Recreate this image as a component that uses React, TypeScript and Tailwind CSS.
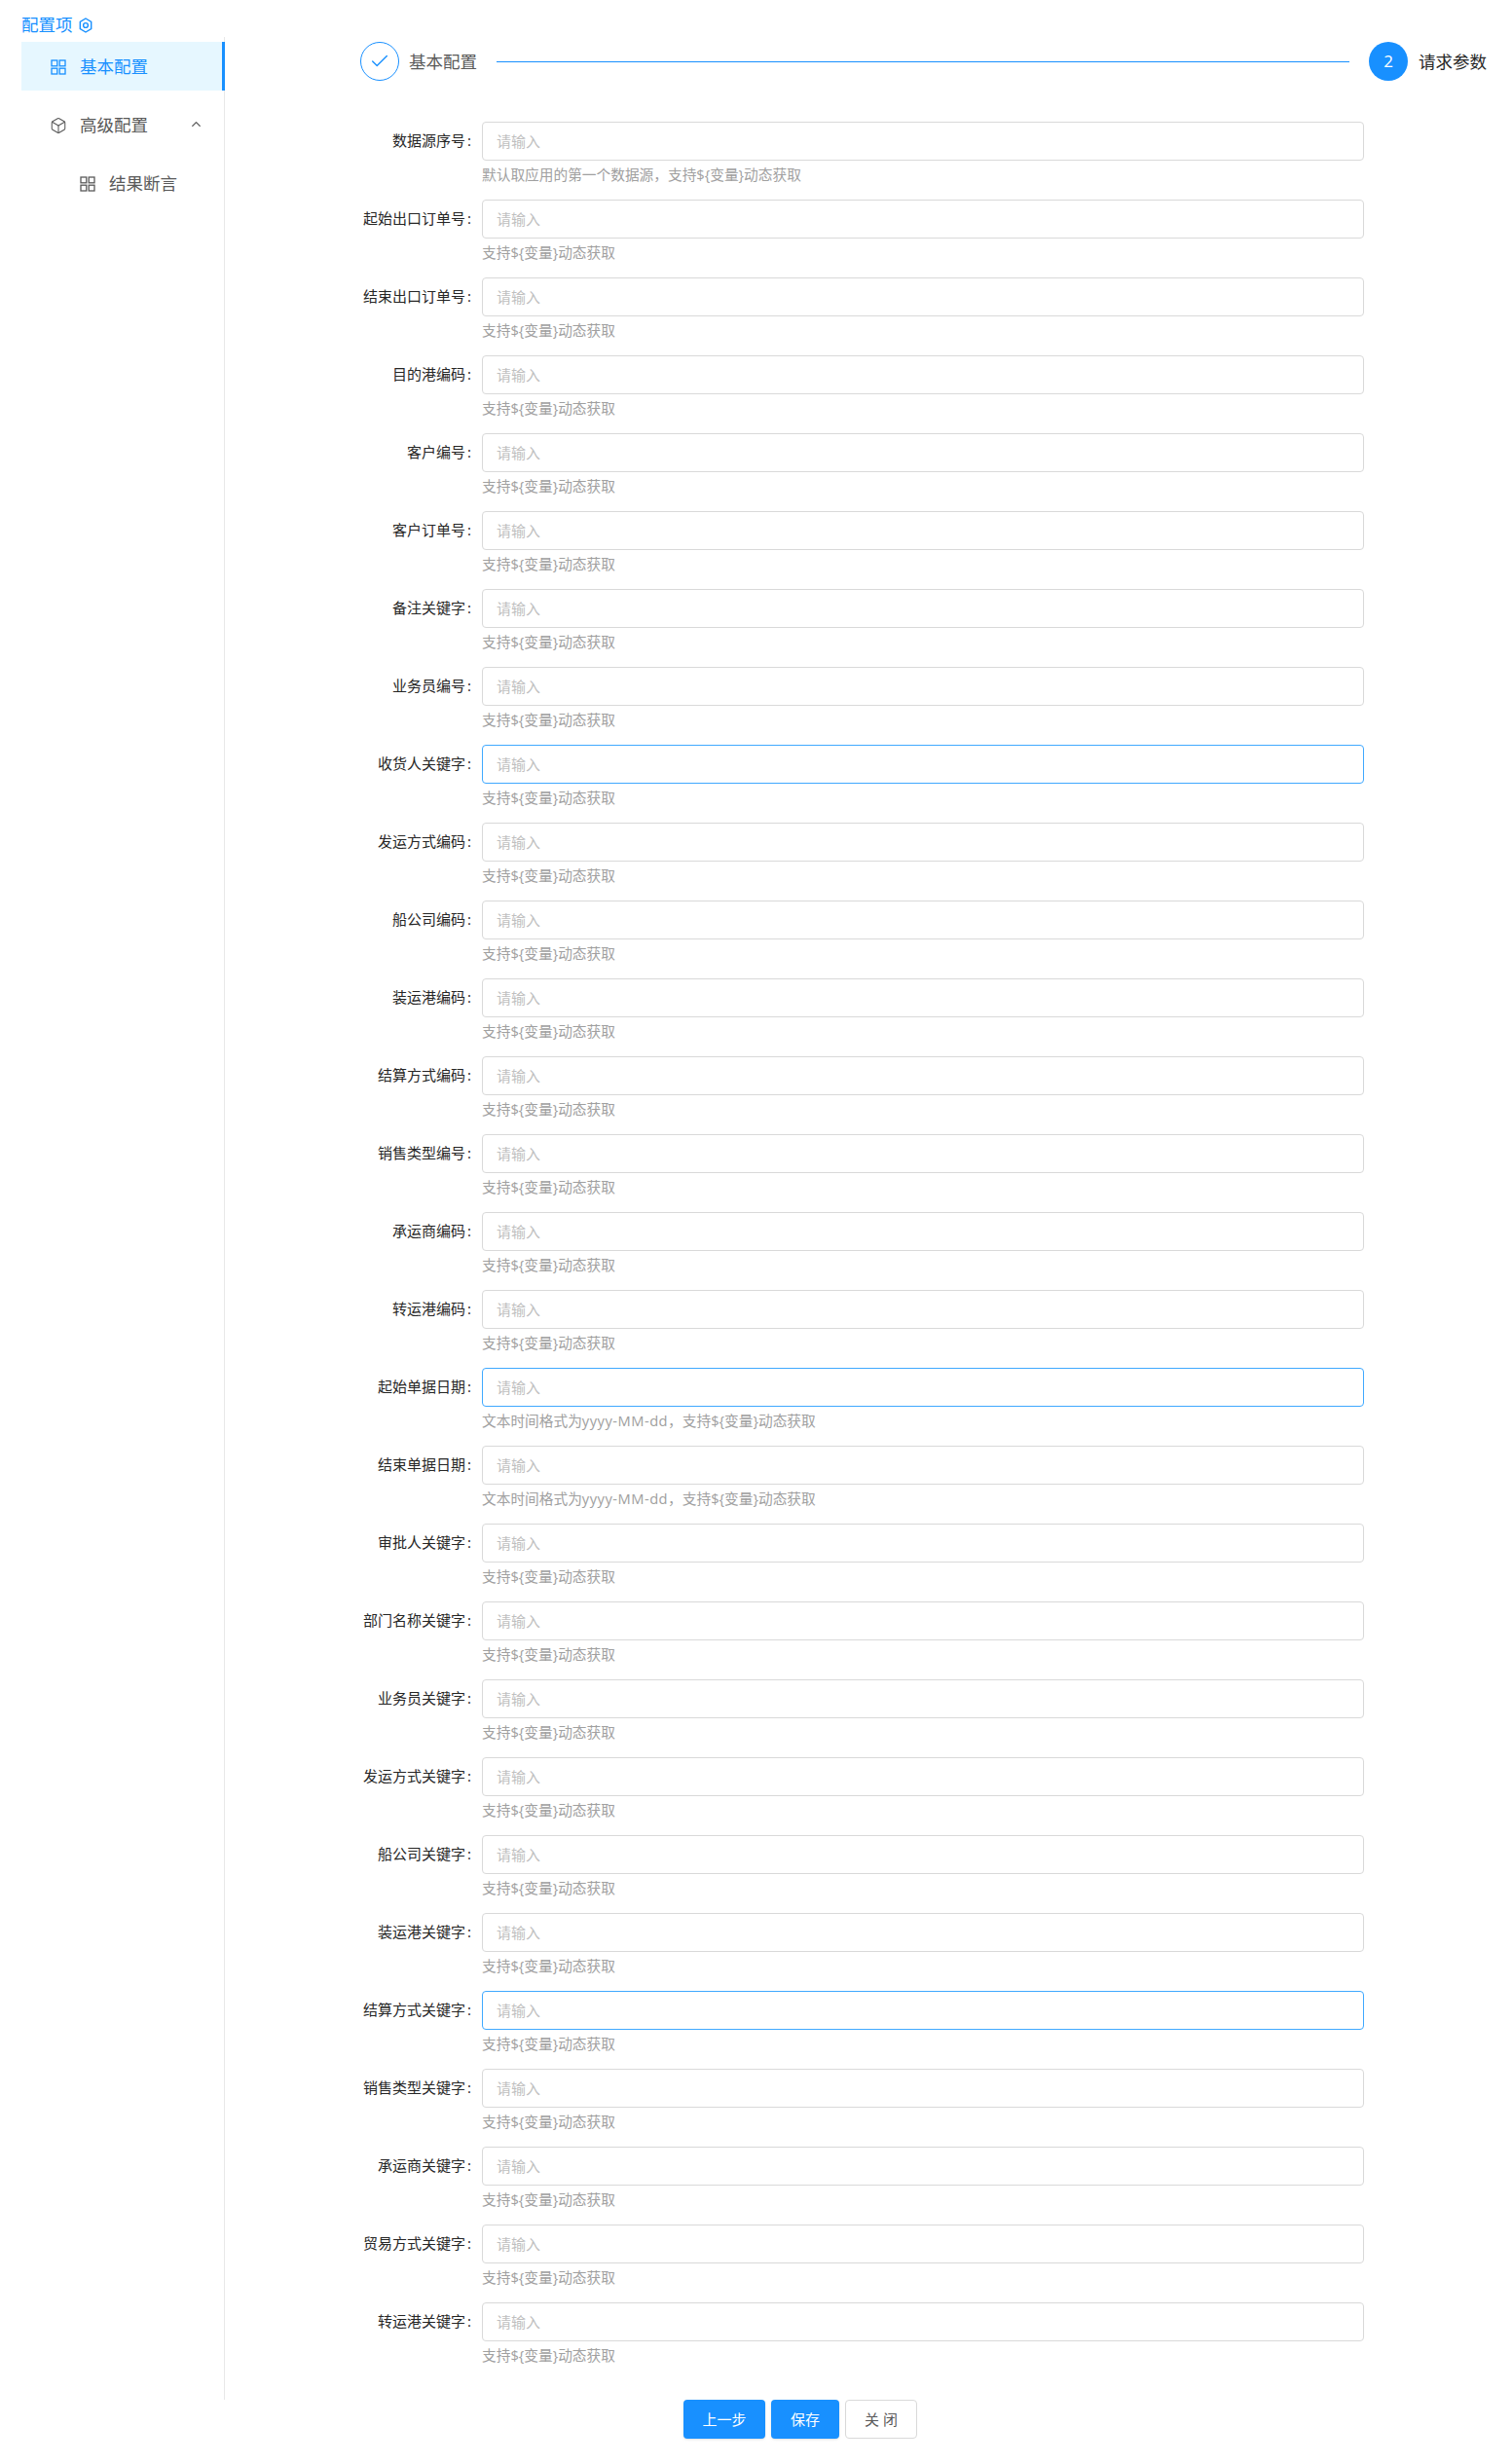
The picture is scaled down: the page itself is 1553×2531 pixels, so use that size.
import type { ReactElement, ReactNode } from 'react';
import { Box, Check, ChevronUp } from 'lucide-react';

const DEFAULT_HELP = '支持${变量}动态获取';
const DATE_HELP = (
  <>
    文本时间格式为<span className="tracking-[0.5px]">yyyy-MM-dd</span>{'\uFF0C支持${变量}动态获取'}
  </>
);

const FIELDS: { label: string; help?: ReactNode; focus?: boolean }[] = [
  { label: '数据源序号', help: '默认取应用的第一个数据源\uFF0C支持${变量}动态获取' },
  { label: '起始出口订单号' },
  { label: '结束出口订单号' },
  { label: '目的港编码' },
  { label: '客户编号' },
  { label: '客户订单号' },
  { label: '备注关键字' },
  { label: '业务员编号' },
  { label: '收货人关键字', focus: true },
  { label: '发运方式编码' },
  { label: '船公司编码' },
  { label: '装运港编码' },
  { label: '结算方式编码' },
  { label: '销售类型编号' },
  { label: '承运商编码' },
  { label: '转运港编码' },
  { label: '起始单据日期', help: DATE_HELP, focus: true },
  { label: '结束单据日期', help: DATE_HELP },
  { label: '审批人关键字' },
  { label: '部门名称关键字' },
  { label: '业务员关键字' },
  { label: '发运方式关键字' },
  { label: '船公司关键字' },
  { label: '装运港关键字' },
  { label: '结算方式关键字', focus: true },
  { label: '销售类型关键字' },
  { label: '承运商关键字' },
  { label: '贸易方式关键字' },
  { label: '转运港关键字' },
];

function GridIcon({ className }: { className: string }): ReactElement {
  return (
    <svg viewBox="0 0 16 16" fill="none" stroke="currentColor" strokeWidth="1.3" className={className}>
      <rect x="1" y="1" width="5.8" height="5.8" />
      <rect x="9.2" y="1" width="5.8" height="5.8" />
      <rect x="1" y="9.2" width="5.8" height="5.8" />
      <rect x="9.2" y="9.2" width="5.8" height="5.8" />
    </svg>
  );
}

function Sidebar(): ReactElement {
  return (
    <aside className="w-[231px] shrink-0 pl-[22px] pb-[66px] flex flex-col">
      <div className="h-[38px] pt-[12px] flex items-center gap-[6px] text-[17.5px] leading-[26px] text-[#1890ff]">
        <span>配置项</span>
        <svg viewBox="0 0 14 16" fill="none" stroke="currentColor" strokeWidth="1.4" className="w-[14px] h-[16px] mt-[2px]">
          <path d="M7 1l5.700 3.300v7.400L7 15l-5.700-3.300V4.300z" />
          <circle cx="7" cy="8" r="2.400" />
        </svg>
      </div>
      <nav className="flex-1 border-r border-[#e8e8e8] pt-[5px] text-[17.5px] leading-[26px] text-[#595959]">
        <div className="h-[50px] -mr-px bg-[#e6f7ff] border-r-[3px] border-[#1890ff] text-[#1890ff] flex items-center pl-[30px]">
          <GridIcon className="w-[16px] h-[16px] mr-[14px] mt-[2px]" />
          <span>基本配置</span>
        </div>
        <div className="h-[50px] mt-[10px] flex items-center pl-[29px] pr-[21px]">
          <Box size={18} strokeWidth={1.4} className="mr-[13px] mt-[2px]" />
          <span className="flex-1">高级配置</span>
          <ChevronUp size={15} strokeWidth={2.2} className="-mt-[2px]" />
        </div>
        <div className="h-[50px] mt-[10px] flex items-center pl-[60px]">
          <GridIcon className="w-[16px] h-[16px] mr-[14px] mt-[2px]" />
          <span className="-mt-[1px]">结果断言</span>
        </div>
      </nav>
    </aside>
  );
}

function Stepper(): ReactElement {
  return (
    <div className="h-[125px] pt-[43px] pl-[139px] pr-[26px] flex items-start">
      <div className="w-10 h-10 rounded-full border border-[#1890ff] flex items-center justify-center text-[#1890ff]">
        <Check size={22} strokeWidth={1.5} />
      </div>
      <span className="ml-[10px] text-[17.5px] leading-[40px] text-[#595959]">基本配置</span>
      <div className="flex-1 h-px bg-[#1890ff] mt-[20px] ml-[20px] mr-[20px]" />
      <div className="w-10 h-10 rounded-full bg-[#1890ff] flex items-center justify-center text-white text-[17px]">2</div>
      <span className="ml-[11px] text-[17.5px] leading-[40px] text-[#262626]">请求参数</span>
    </div>
  );
}

function Field({ label, help, focus }: { label: string; help?: ReactNode; focus?: boolean }): ReactElement {
  return (
    <div className="h-[80px] flex items-start">
      <label className="w-[264px] pr-[10px] h-[38px] flex items-center justify-end text-[15px] text-[#262626]">
        {label}<span className="ml-[2px] mr-[1px]">:</span>
      </label>
      <div className="w-[906px]">
        <input
          placeholder="请输入"
          className={`block w-full h-10 rounded-[4px] border px-[14px] text-[15px] outline-none placeholder:text-[#bfbfbf] ${focus ? 'border-[#40a9ff]' : 'border-[#d9d9d9]'}`}
        />
        <div className="mt-[2px] text-[14.7px] leading-[24px] text-[#a0a0a0]">{help ?? DEFAULT_HELP}</div>
      </div>
    </div>
  );
}

function Footer(): ReactElement {
  return (
    <div className="mt-[20px] pl-[471px] flex gap-[6px] text-[15px]">
      <button className="w-[84px] h-10 rounded-[4px] bg-[#1890ff] text-white shadow-sm">上一步</button>
      <button className="w-[70px] h-10 rounded-[4px] bg-[#1890ff] text-white shadow-sm">保存</button>
      <button className="w-[74px] h-10 rounded-[4px] border border-[#d9d9d9] bg-white text-[#595959]">关 闭</button>
    </div>
  );
}

export default function App(): ReactElement {
  return (
    <div
      className="flex w-[1553px] h-[2531px] bg-white"
      style={{ fontFamily: '"Open Sans", "Noto Sans CJK SC", sans-serif' }}
    >
      <Sidebar />
      <main className="flex-1">
        <Stepper />
        {FIELDS.map((field) => (
          <Field key={field.label} {...field} />
        ))}
        <Footer />
      </main>
    </div>
  );
}
